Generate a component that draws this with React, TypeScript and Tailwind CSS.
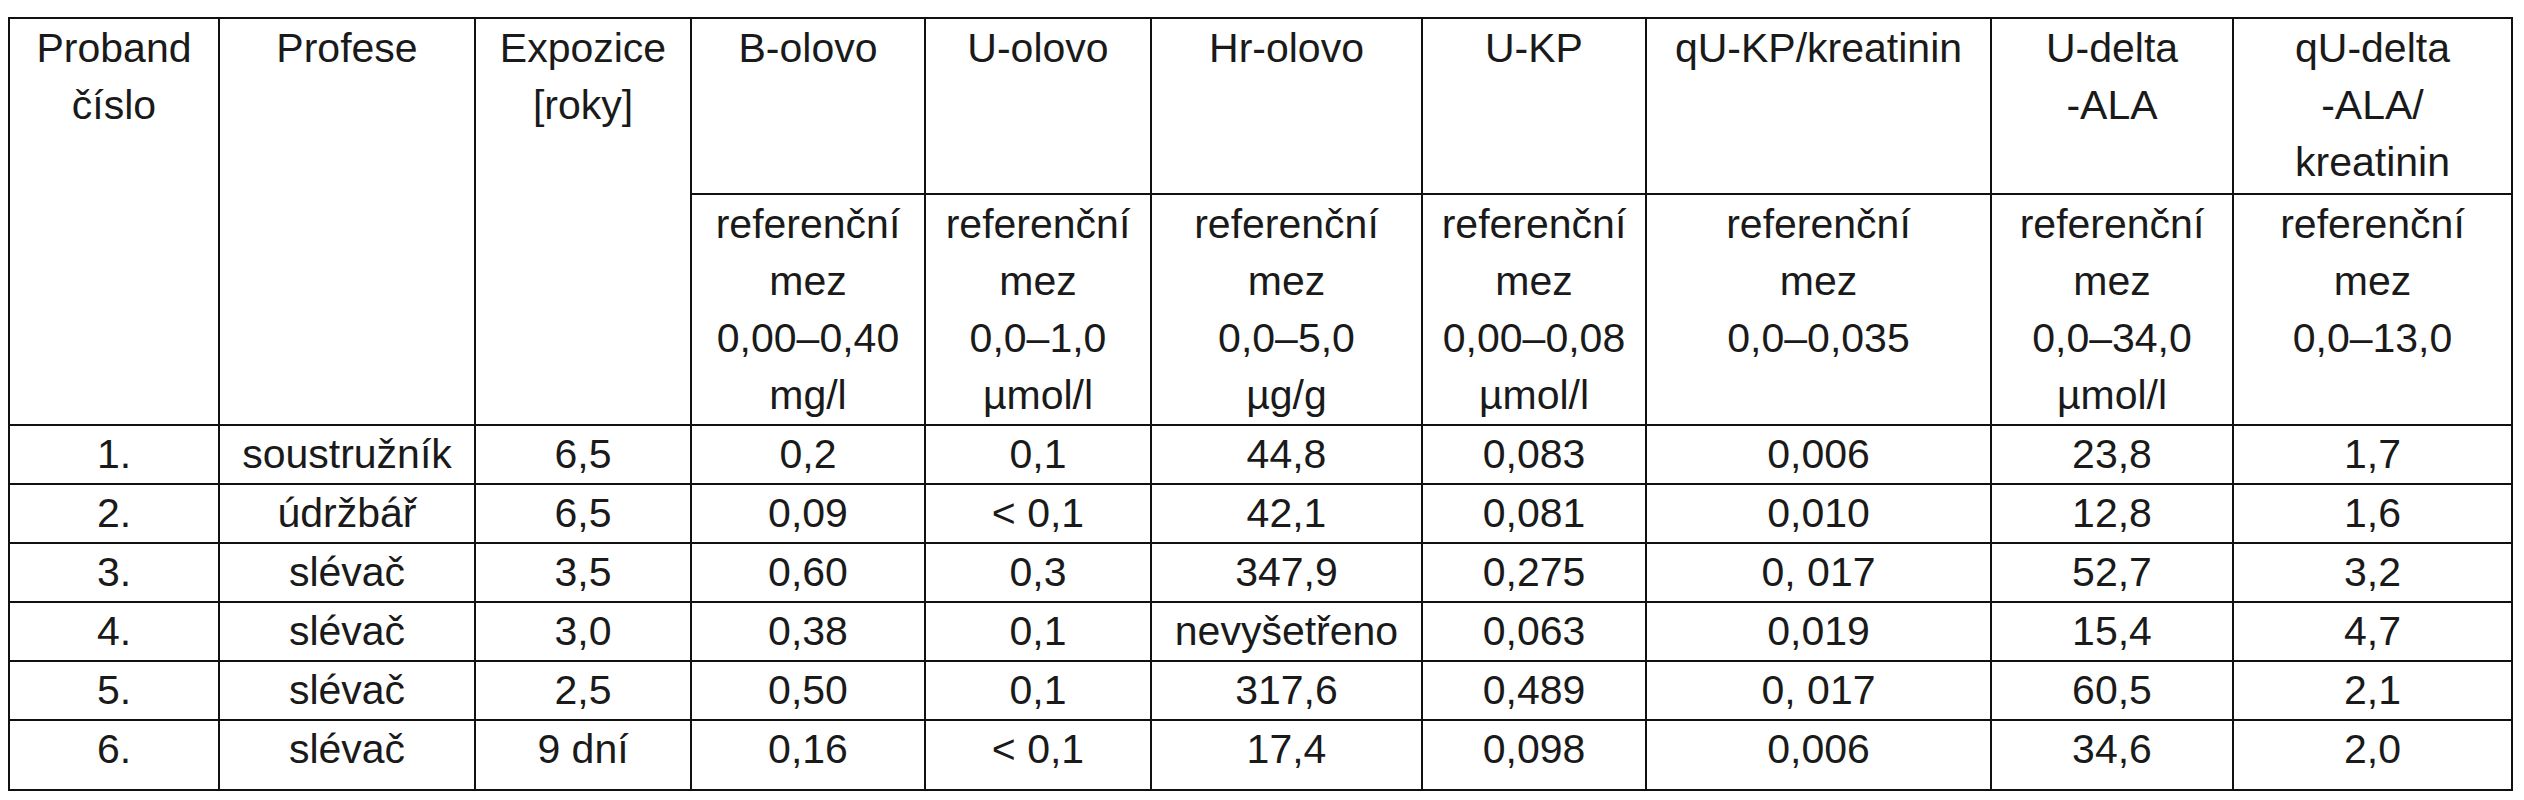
const cols = [210, 256, 216, 234, 226, 271, 224, 345, 242, 279]

const measures: { name: string[]; ref: string[] }[] = [
  { name: ['B-olovo'], ref: ['referenční', 'mez', '0,00–0,40', 'mg/l'] },
  { name: ['U-olovo'], ref: ['referenční', 'mez', '0,0–1,0', 'µmol/l'] },
  { name: ['Hr-olovo'], ref: ['referenční', 'mez', '0,0–5,0', 'µg/g'] },
  { name: ['U-KP'], ref: ['referenční', 'mez', '0,00–0,08', 'µmol/l'] },
  { name: ['qU-KP/kreatinin'], ref: ['referenční', 'mez', '0,0–0,035'] },
  { name: ['U-delta', '-ALA'], ref: ['referenční', 'mez', '0,0–34,0', 'µmol/l'] },
  { name: ['qU-delta', '-ALA/', 'kreatinin'], ref: ['referenční', 'mez', '0,0–13,0'] },
]

const rows = [
  ['1.', 'soustružník', '6,5', '0,2', '0,1', '44,8', '0,083', '0,006', '23,8', '1,7'],
  ['2.', 'údržbář', '6,5', '0,09', '< 0,1', '42,1', '0,081', '0,010', '12,8', '1,6'],
  ['3.', 'slévač', '3,5', '0,60', '0,3', '347,9', '0,275', '0, 017', '52,7', '3,2'],
  ['4.', 'slévač', '3,0', '0,38', '0,1', 'nevyšetřeno', '0,063', '0,019', '15,4', '4,7'],
  ['5.', 'slévač', '2,5', '0,50', '0,1', '317,6', '0,489', '0, 017', '60,5', '2,1'],
  ['6.', 'slévač', '9 dní', '0,16', '< 0,1', '17,4', '0,098', '0,006', '34,6', '2,0'],
]

const cell = 'border-2 border-[#111] p-0 text-center align-top whitespace-nowrap'

function Lines({ items }: { items: string[] }) {
  return (
    <>
      {items.map((t, i) => (
        <div key={i}>{t}</div>
      ))}
    </>
  )
}

export default function App() {
  return (
    <div className="w-[2524px] h-[800px] bg-white overflow-hidden pt-[17px] pl-[8px]">
      <table className="table-fixed border-collapse w-[2505px] text-[41px] leading-[57px] text-[#1a1a1a] font-['Liberation_Sans',Arial,sans-serif]">
        <colgroup>
          {cols.map((w, i) => (
            <col key={i} style={{ width: w }} />
          ))}
        </colgroup>
        <thead>
          <tr className="h-[176px]">
            <th rowSpan={2} className={`${cell} font-normal pt-[1px]`}>
              <Lines items={['Proband', 'číslo']} />
            </th>
            <th rowSpan={2} className={`${cell} font-normal pt-[1px]`}>
              Profese
            </th>
            <th rowSpan={2} className={`${cell} font-normal pt-[1px]`}>
              <Lines items={['Expozice', '[roky]']} />
            </th>
            {measures.map((m) => (
              <th key={m.name.join()} className={`${cell} font-normal pt-[1px]`}>
                <Lines items={m.name} />
              </th>
            ))}
          </tr>
          <tr className="h-[229px]">
            {measures.map((m) => (
              <th key={m.name.join()} className={`${cell} font-normal pt-[1px]`}>
                <Lines items={m.ref} />
              </th>
            ))}
          </tr>
        </thead>
        <tbody>
          {rows.map((r, i) => (
            <tr key={i} className={i === rows.length - 1 ? 'h-[70px]' : 'h-[58px]'}>
              {r.map((v, j) => (
                <td key={j} className={cell}>
                  {v}
                </td>
              ))}
            </tr>
          ))}
        </tbody>
      </table>
    </div>
  )
}
